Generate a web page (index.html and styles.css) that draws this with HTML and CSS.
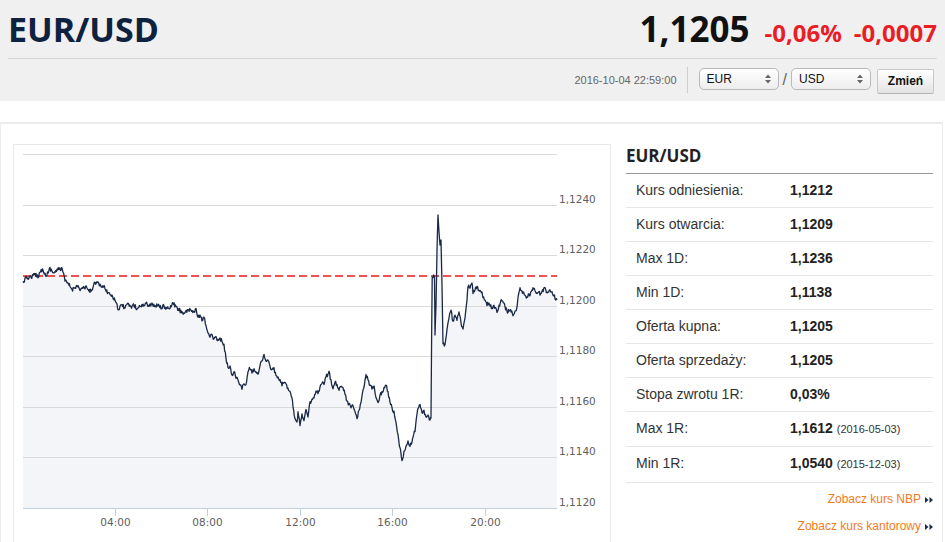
FILE: index.html
```html
<!DOCTYPE html>
<html lang="pl">
<head>
<meta charset="utf-8">
<title>EUR/USD</title>
<link rel="stylesheet" href="styles.css">
</head>
<body>
<header class="top">
  <div class="title-row">
    <h1 class="pair">EUR/USD</h1>
    <div class="quote">
      <span class="price">1,1205</span>
      <span class="chg chg-pct">-0,06%</span>
      <span class="chg chg-abs">-0,0007</span>
    </div>
  </div>
  <div class="tools-row">
    <span class="stamp">2016-10-04 22:59:00</span>
    <span class="vsep"></span>
    <div class="sel"><span>EUR</span><svg class="updown" width="6" height="10" viewBox="0 0 6 10"><polygon points="0,4 3,0.5 6,4"/><polygon points="0,6 3,9.5 6,6"/></svg></div>
    <span class="slash">/</span>
    <div class="sel"><span>USD</span><svg class="updown" width="6" height="10" viewBox="0 0 6 10"><polygon points="0,4 3,0.5 6,4"/><polygon points="0,6 3,9.5 6,6"/></svg></div>
    <button class="btn" type="button">Zmień</button>
  </div>
</header>
<main class="main">
  <section class="chart-box">
    <svg class="chart" width="596" height="400" viewBox="14 145 596 400">
      <path id="area" class="area" d=""/>
      <g class="grid">
        <line x1="23" y1="154.5" x2="557" y2="154.5"/>
        <line x1="23" y1="205.5" x2="557" y2="205.5"/>
        <line x1="23" y1="255.5" x2="557" y2="255.5"/>
        <line x1="23" y1="306.5" x2="557" y2="306.5"/>
        <line x1="23" y1="356.5" x2="557" y2="356.5"/>
        <line x1="23" y1="407.5" x2="557" y2="407.5"/>
        <line x1="23" y1="457.5" x2="557" y2="457.5"/>
      </g>
      <line class="ref" x1="23" y1="276" x2="557" y2="276"/>
      <path id="line" class="line" d=""/>
      <g class="axis">
        <line x1="23" y1="508.5" x2="557" y2="508.5"/>
        <line x1="115.5" y1="509" x2="115.5" y2="516"/>
        <line x1="207.5" y1="509" x2="207.5" y2="516"/>
        <line x1="300.5" y1="509" x2="300.5" y2="516"/>
        <line x1="392.5" y1="509" x2="392.5" y2="516"/>
        <line x1="485.5" y1="509" x2="485.5" y2="516"/>
      </g>
      <g class="ylab">
        <text x="559" y="203">1,1240</text>
        <text x="559" y="253">1,1220</text>
        <text x="559" y="304">1,1200</text>
        <text x="559" y="354">1,1180</text>
        <text x="559" y="405">1,1160</text>
        <text x="559" y="455">1,1140</text>
        <text x="559" y="506">1,1120</text>
      </g>
      <g class="xlab">
        <text x="115.5" y="526">04:00</text>
        <text x="207.5" y="526">08:00</text>
        <text x="300.5" y="526">12:00</text>
        <text x="392.5" y="526">16:00</text>
        <text x="485.5" y="526">20:00</text>
      </g>
    </svg>
  </section>
  <aside class="panel">
    <h2 class="panel-title">EUR/USD</h2>
    <dl class="stats">
      <div class="row"><dt>Kurs odniesienia:</dt><dd>1,1212</dd></div>
      <div class="row"><dt>Kurs otwarcia:</dt><dd>1,1209</dd></div>
      <div class="row"><dt>Max 1D:</dt><dd>1,1236</dd></div>
      <div class="row"><dt>Min 1D:</dt><dd>1,1138</dd></div>
      <div class="row"><dt>Oferta kupna:</dt><dd>1,1205</dd></div>
      <div class="row"><dt>Oferta sprzedaży:</dt><dd>1,1205</dd></div>
      <div class="row"><dt>Stopa zwrotu 1R:</dt><dd>0,03%</dd></div>
      <div class="row"><dt>Max 1R:</dt><dd>1,1612 <span class="date">(2016-05-03)</span></dd></div>
      <div class="row row-last"><dt>Min 1R:</dt><dd>1,0540 <span class="date">(2015-12-03)</span></dd></div>
    </dl>
    <div class="links">
      <a class="more" href="#">Zobacz kurs NBP<svg class="dbl" width="8" height="6" viewBox="0 0 8 6"><polygon points="0,0 3.5,3 0,6"/><polygon points="4.5,0 8,3 4.5,6"/></svg></a>
      <a class="more" href="#">Zobacz kurs kantorowy<svg class="dbl" width="8" height="6" viewBox="0 0 8 6"><polygon points="0,0 3.5,3 0,6"/><polygon points="4.5,0 8,3 4.5,6"/></svg></a>
    </div>
  </aside>
</main>
<script src="script.js"></script>
</body>
</html>
```

FILE: styles.css
```css
html, body {
  margin: 0;
  padding: 0;
  height: 542px;
  overflow: hidden;
}
body {
  width: 945px;
  background: #fff;
  color: #333;
  font-family: "Liberation Sans", Arial, sans-serif;
}

/* header */
.top {
  background: #f0f0f0;
  height: 101px;
  padding: 0 8px;
  box-sizing: border-box;
}
.title-row {
  display: flex;
  justify-content: space-between;
  align-items: baseline;
  height: 59px;
  box-sizing: border-box;
  padding-top: 6px;
  border-bottom: 1px solid #d8d8d8;
}
.pair {
  margin: 0;
  font-family: "Open Sans", sans-serif;
  font-weight: 700;
  font-size: 34px;
  line-height: 46px;
  color: #0e2240;
}
.quote {
  display: flex;
  align-items: baseline;
  font-family: "Open Sans", sans-serif;
  font-weight: 700;
}
.price {
  font-size: 35px;
  line-height: 46px;
  color: #111;
}
.chg {
  font-size: 24px;
  color: #e91e25;
}
.chg-pct { margin-left: 15px; }
.chg-abs { margin-left: 12px; }

.tools-row {
  display: flex;
  justify-content: flex-end;
  align-items: center;
  height: 42px;
  padding-right: 3px;
}
.stamp {
  font-size: 11px;
  color: #666;
}
.vsep {
  width: 1px;
  height: 26px;
  background: #cfcfcf;
  margin: 0 11px 0 10px;
}
.sel {
  width: 80px;
  height: 22px;
  box-sizing: border-box;
  margin-top: -3px;
  padding: 0 7px 0 7px;
  display: flex;
  align-items: center;
  justify-content: space-between;
  border: 1px solid #b9b9b9;
  border-radius: 5px;
  background: linear-gradient(#ffffff, #ededed);
  font-size: 12px;
  color: #111;
}
.updown { fill: #666; }
.slash {
  font-size: 16px;
  color: #666;
  margin: 0 4px 0 4px;
}
.btn {
  width: 57px;
  height: 25px;
  margin: 2px 0 0 6px;
  padding: 0;
  border: 1px solid #c9c9c9;
  border-bottom-color: #b5b5b5;
  border-radius: 2px;
  background: linear-gradient(#ffffff, #e3e3e3);
  font-family: "Liberation Sans", Arial, sans-serif;
  font-weight: 700;
  font-size: 12px;
  color: #111;
}

/* main */
.main {
  display: flex;
  width: 943px;
  height: 420px;
  box-sizing: border-box;
  margin-top: 21px;
  padding: 20px 9px 0 12px;
  border-top: 2px solid #ececec;
  border-left: 1px solid #ececec;
  border-right: 1px solid #ececec;
}
.chart-box {
  width: 598px;
  height: 410px;
  flex: none;
  box-sizing: border-box;
  border: 1px solid #e8e8e8;
  background: #fff;
}
.chart { display: block; }
.area { fill: #f4f5f8; }
.grid line { stroke: #dadada; stroke-width: 1; }
.ref { stroke: #f01818; stroke-width: 1.5; stroke-dasharray: 8 4; }
.line {
  fill: none;
  stroke: #1a2947;
  stroke-width: 1.3;
  stroke-linejoin: round;
}
.axis line { stroke: #c0d0e0; stroke-width: 1; }
.ylab text, .xlab text {
  font-family: "DejaVu Sans", sans-serif;
  font-size: 10.5px;
  fill: #606060;
}
.xlab text { text-anchor: middle; }

/* panel */
.panel {
  width: 307px;
  flex: none;
  margin-left: 15px;
}
.panel-title {
  margin: 0;
  padding-bottom: 6px;
  font-family: "Open Sans", sans-serif;
  font-weight: 700;
  font-size: 17px;
  line-height: 23px;
  color: #222;
  border-bottom: 1px solid #9a9a9a;
}
.stats { margin: 0; }
.row {
  display: grid;
  grid-template-columns: 154px 1fr;
  padding: 8px 10px;
  font-size: 14px;
  line-height: 17px;
  border-bottom: 1px solid #e6e6e6;
}
.row-last { padding-bottom: 9px; }
.row dt { color: #333; }
.row dd {
  margin: 0;
  font-weight: 700;
  color: #222;
}
.date {
  font-size: 11px;
  font-weight: 400;
  color: #333;
}
.links {
  padding-top: 3px;
  text-align: right;
}
.more {
  display: block;
  padding: 6px 0;
  font-size: 12px;
  line-height: 15px;
  color: #f47a20;
  text-decoration: none;
}
.dbl {
  fill: #1d2b4a;
  margin-left: 4px;
  vertical-align: 0;
}
```

FILE: script.js
```js
(function () {
  var key = [
    [23,282],[25,279],[27,278],[30,277],[33,276],[36,274],[38,277],[40,272],[43,269],[45,274],
    [47,275],[50,268],[52,271],[54,273],[57,270],[60,269],[62,268],[63,272],[65,281],[67,283],
    [70,286],[72,290],[75,287],[77,285],[80,290],[83,288],[87,288],[90,292],[93,287],[95,282],
    [97,283],[100,285],[103,287],[105,288],[108,293],[110,294],[112,295],[115,300],[117,304],[118,310],
    [120,307],[122,305],[125,308],[128,304],[131,307],[134,305],[137,309],[140,306],[143,305],[146,303],
    [149,306],[152,303],[155,307],[158,305],[161,308],[164,306],[167,309],[170,308],[173,303],[176,307],
    [179,310],[182,312],[185,313],[188,311],[191,310],[194,312],[196,309],[198,318],[200,315],[202,321],
    [204,318],[206,325],[208,333],[210,338],[212,334],[214,339],[216,336],[218,340],[220,338],[222,342],
    [224,345],[226,358],[228,368],[230,366],[232,375],[234,371],[236,378],[238,380],[240,384],[242,389],
    [244,384],[246,385],[248,372],[250,368],[252,373],[254,369],[256,371],[258,375],[260,366],[262,360],
    [264,355],[266,362],[268,360],[270,367],[272,370],[274,368],[276,376],[278,378],[280,380],[282,385],
    [284,383],[286,384],[288,388],[290,391],[292,398],[293,406],[295,418],[297,422],[298,412],[300,425],
    [302,414],[304,420],[306,410],[308,418],[310,402],[312,400],[314,398],[316,392],[318,393],[320,388],
    [322,383],[324,385],[326,377],[328,374],[329,372],[331,380],[333,388],[335,382],[337,384],[339,390],
    [341,386],[343,388],[345,394],[347,401],[349,404],[351,408],[353,405],[355,412],[357,418],[359,410],
    [361,403],[363,391],[365,380],[366,374],[368,380],[370,385],[372,389],[374,385],[376,398],[378,402],
    [380,395],[382,392],[384,388],[386,385],[388,392],[390,402],[392,408],[394,412],[396,422],[398,435],
    [400,448],[402,460],[404,452],[406,446],[408,440],[410,446],[412,442],[413,437],[415,431],[417,414],
    [418,408],[420,405],[422,412],[424,410],[426,418],[428,414],[430,420],[431,418],[431.6,340],[432.2,277],
    [434.5,277],[435,335],[436,305],[437,250],[438,215],[439,232],[440,245],[441,240],[442,285],[443,343],
    [445,345],[447,330],[449,318],[451,310],[453,322],[455,315],[457,321],[459,312],[461,323],[463,330],
    [465,318],[467,300],[468,286],[470,288],[472,283],[473,293],[475,289],[477,287],[479,291],[482,292],
    [483,297],[485,301],[487,305],[489,303],[492,308],[494,306],[497,312],[499,306],[502,300],[504,303],
    [505,307],[507,311],[508,312],[510,310],[513,315],[515,311],[517,307],[518,298],[520,288],[522,291],
    [523,293],[525,296],[527,297],[529,294],[530,295],[532,290],[533,287],[535,291],[537,293],[539,292],
    [540,295],[542,291],[545,288],[547,292],[548,293],[550,290],[552,292],[554,296],[555,298],[557,300]
  ];
  var seed = 12345;
  function rnd() {
    seed = (seed * 16807) % 2147483647;
    return seed / 2147483647;
  }
  var pts = [];
  for (var i = 0; i < key.length - 1; i++) {
    var a = key[i], b = key[i + 1];
    var dx = b[0] - a[0];
    var steps = Math.max(1, Math.round(dx * 1.5));
    pts.push([a[0], a[1] + (dx > 1 ? (rnd() - 0.5) * 2 : 0)]);
    for (var s = 1; s < steps; s++) {
      var t = s / steps;
      var n = (rnd() - 0.5) * 4.2;
      pts.push([a[0] + dx * t, a[1] + (b[1] - a[1]) * t + n]);
    }
  }
  pts.push(key[key.length - 1]);
  var d = "M" + pts.map(function (p) { return p[0].toFixed(2) + "," + p[1].toFixed(2); }).join("L");
  document.getElementById("line").setAttribute("d", d);
  document.getElementById("area").setAttribute("d", d + "L557,508.5L23,508.5Z");
})();
```
